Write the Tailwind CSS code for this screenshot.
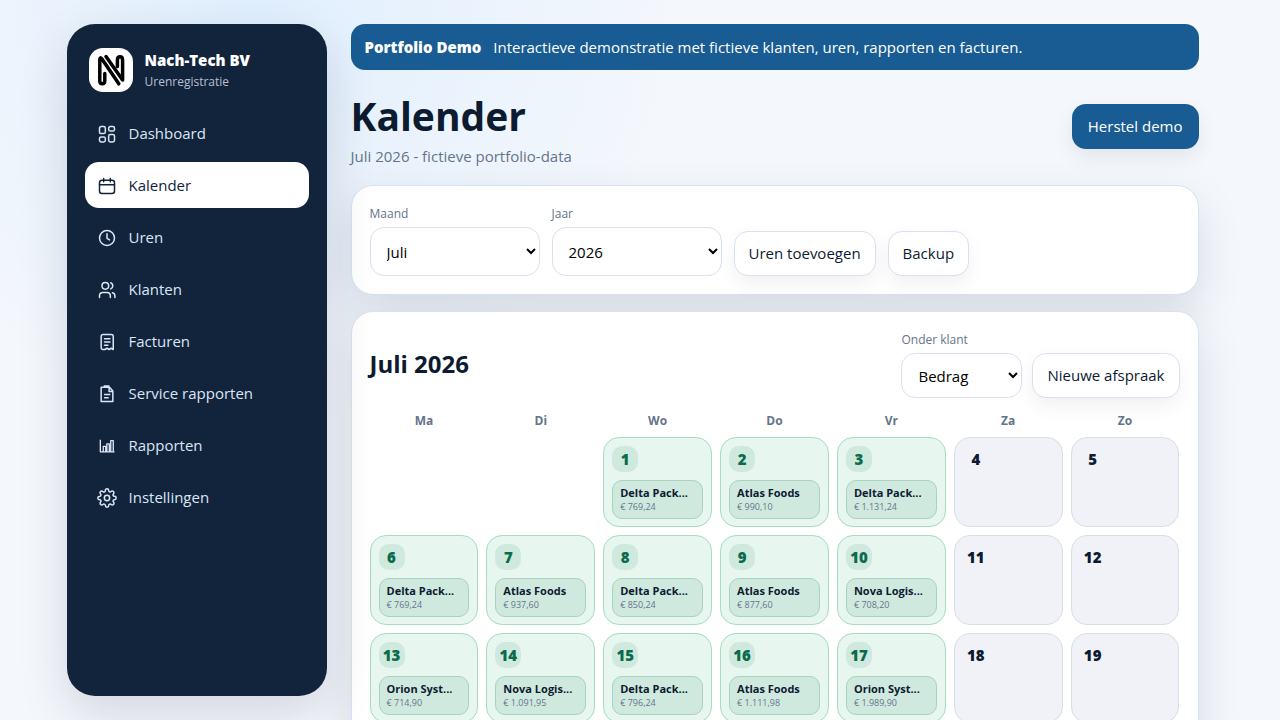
<!DOCTYPE html>
<html lang="nl">
<head>
<meta charset="utf-8">
<meta name="viewport" content="width=device-width, initial-scale=1">
<title>Kalender - Nach-Tech BV</title>
<script src="https://cdn.jsdelivr.net/npm/@tailwindcss/browser@4"></script>
</head>
<body class="min-h-screen bg-[#f4f7fc] bg-[radial-gradient(circle_at_20%_0%,#e0effe_0px,#f4f7fc_420px)] bg-no-repeat pr-[15px] font-['Segoe_UI','Open_Sans',sans-serif] text-[15px] text-[#0d1b30]">
<div class="mx-auto flex max-w-[1180px] items-start gap-6 p-6">

  <aside class="sticky top-6 h-[calc(100vh-48px)] w-[260px] shrink-0 rounded-[28px] bg-[#12243c] p-[18px] shadow-[0_18px_50px_rgba(15,23,42,0.14)]">
    <div class="flex items-center gap-3 px-1 pt-[6px] pb-[18px]">
      <svg class="size-11 shrink-0 rounded-[14px] bg-white" viewBox="0 0 44 44" fill="none" stroke="#000" stroke-width="3.500" stroke-linecap="round" stroke-linejoin="round" role="img" aria-label="Nach-Tech logo">
        <path d="M29.800 35.800 12.800 10.800Q10.800 8.500 10.800 12V33Q10.800 35.800 13.300 35.800 15.800 35.800 15.800 32.500V25.500"/>
        <path d="M17 8.600 33.600 32V12Q33.600 8.700 31 8.700 28.400 8.700 28.400 12V18.500"/>
      </svg>
      <div>
        <div class="text-[15px] leading-6 font-extrabold text-white">Nach-Tech BV</div>
        <div class="text-xs leading-5 text-[#b3c0d3]">Urenregistratie</div>
      </div>
    </div>
    <nav aria-label="Hoofdmenu" class="flex flex-col gap-[6px] text-[#dbe6f5]">
      <a href="#dashboard" class="flex h-[46px] items-center gap-3 rounded-[14px] px-3 pt-px">
        <svg class="size-5" viewBox="0 0 24 24" fill="none" stroke="currentColor" stroke-width="1.8" aria-hidden="true"><rect x="3" y="3" width="7" height="8.500" rx="2"/><rect x="14" y="3" width="7" height="5.500" rx="2"/><rect x="14" y="12.500" width="7" height="9" rx="2"/><rect x="3" y="15.500" width="7" height="6" rx="2"/></svg>
        Dashboard</a>
      <a href="#kalender" aria-current="page" class="flex h-[46px] items-center gap-3 rounded-[14px] bg-white px-3 pt-px text-[#12243c]">
        <svg class="size-5" viewBox="0 0 24 24" fill="none" stroke="currentColor" stroke-width="1.8" stroke-linecap="round" aria-hidden="true"><rect x="3" y="5" width="18" height="16" rx="3"/><path d="M3 10.500h18M8 3v4M16 3v4"/></svg>
        Kalender</a>
      <a href="#uren" class="flex h-[46px] items-center gap-3 rounded-[14px] px-3 pt-px">
        <svg class="size-5" viewBox="0 0 24 24" fill="none" stroke="currentColor" stroke-width="1.8" stroke-linecap="round" stroke-linejoin="round" aria-hidden="true"><circle cx="12" cy="12" r="9"/><path d="M12 7v5.500l3 1.800"/></svg>
        Uren</a>
      <a href="#klanten" class="flex h-[46px] items-center gap-3 rounded-[14px] px-3 pt-px">
        <svg class="size-5" viewBox="0 0 24 24" fill="none" stroke="currentColor" stroke-width="1.8" stroke-linecap="round" stroke-linejoin="round" aria-hidden="true"><circle cx="10" cy="7" r="4"/><path d="M3 21v-2a4 4 0 0 1 4-4h5a4 4 0 0 1 4 4v2M16.500 3.300a4 4 0 0 1 0 7.400M21.500 21v-2a4 4 0 0 0-3-3.800"/></svg>
        Klanten</a>
      <a href="#facturen" class="flex h-[46px] items-center gap-3 rounded-[14px] px-3 pt-px">
        <svg class="size-5" viewBox="0 0 24 24" fill="none" stroke="currentColor" stroke-width="1.8" stroke-linecap="round" stroke-linejoin="round" aria-hidden="true"><path d="M7 3h10a2.500 2.500 0 0 1 2.500 2.500V21l-2.500-1.500-2.500 1.500-2.500-1.500L9.500 21 7 21a2 2 0 0 1-2-2V5a2 2 0 0 1 2-2ZM9 8h6.500M9 12h6.500M9 16h4"/></svg>
        Facturen</a>
      <a href="#service" class="flex h-[46px] items-center gap-3 rounded-[14px] px-3 pt-px">
        <svg class="size-5" viewBox="0 0 24 24" fill="none" stroke="currentColor" stroke-width="1.8" stroke-linejoin="round" aria-hidden="true"><path d="M5 4h10l4 4.500V21H5ZM8 2.500h7M14.500 4v5H19M8.500 12.500h7.500M8.500 16.500h5.500"/></svg>
        Service rapporten</a>
      <a href="#rapporten" class="flex h-[46px] items-center gap-3 rounded-[14px] px-3 pt-px">
        <svg class="size-5" viewBox="0 0 24 24" fill="none" stroke="currentColor" stroke-width="1.600" stroke-linejoin="round" aria-hidden="true"><path d="M4 4.500V19h17M7.500 19v-6.500h3V19M11.800 19V9.500h3V19M16.500 19V5.500h3V19"/></svg>
        Rapporten</a>
      <a href="#instellingen" class="flex h-[46px] items-center gap-3 rounded-[14px] px-3 pt-px">
        <svg class="size-5" viewBox="0 0 24 24" fill="none" stroke="currentColor" stroke-width="1.8" stroke-linecap="round" stroke-linejoin="round" aria-hidden="true"><circle cx="12" cy="12" r="3.200"/><path d="M19.400 15a1.650 1.650 0 0 0 .33 1.820l.06.06a2 2 0 1 1-2.830 2.830l-.06-.06a1.650 1.650 0 0 0-1.820-.33 1.650 1.650 0 0 0-1 1.510V21a2 2 0 0 1-4 0v-.09A1.650 1.650 0 0 0 9 19.400a1.650 1.650 0 0 0-1.820.33l-.06.06a2 2 0 1 1-2.830-2.830l.06-.06a1.650 1.650 0 0 0 .33-1.820 1.650 1.650 0 0 0-1.510-1H3a2 2 0 0 1 0-4h.09A1.650 1.650 0 0 0 4.600 9a1.650 1.650 0 0 0-.33-1.820l-.06-.06a2 2 0 1 1 2.830-2.830l.06.06a1.650 1.650 0 0 0 1.820.33H9a1.650 1.650 0 0 0 1-1.510V3a2 2 0 0 1 4 0v.09a1.650 1.650 0 0 0 1 1.510 1.650 1.650 0 0 0 1.820-.33l.06-.06a2 2 0 1 1 2.830 2.830l-.06.06a1.650 1.650 0 0 0-.33 1.820V9a1.650 1.650 0 0 0 1.510 1H21a2 2 0 0 1 0 4h-.09a1.650 1.650 0 0 0-1.510 1z"/></svg>
        Instellingen</a>
    </nav>
  </aside>

  <main class="min-w-0 flex-1">
    <div class="flex h-[46px] items-center gap-3 rounded-[14px] bg-[#195c93] px-[14px] text-white">
      <strong class="font-extrabold">Portfolio Demo</strong><span>Interactieve demonstratie met fictieve klanten, uren, rapporten en facturen.</span>
    </div>

    <header class="mt-[18px] flex items-center justify-between">
      <div>
        <h1 class="text-[39px] leading-[56px] font-bold">Kalender</h1>
        <p class="pb-[2px] leading-6 text-[#64748b]">Juli 2026 - fictieve portfolio-data</p>
      </div>
      <button type="button" class="mb-[5px] h-[45px] rounded-[14px] bg-[#195c93] px-4 text-white shadow-[0_8px_20px_rgba(15,23,42,0.08)]">Herstel demo</button>
    </header>

    <section class="mt-[15px] flex items-end gap-3 rounded-[22px] border border-[#d7e1f0] bg-white p-[18px] shadow-[0_18px_46px_rgba(15,23,42,0.12)]">
      <label class="flex w-[170px] flex-col gap-[3px] text-xs leading-5 text-[#64748b]">Maand
        <select class="h-[49px] rounded-[14px] border border-[#d7e1f0] bg-white px-3 text-[15px] text-black"><option>Juli</option></select>
      </label>
      <label class="flex w-[170px] flex-col gap-[3px] text-xs leading-5 text-[#64748b]">Jaar
        <select class="h-[49px] rounded-[14px] border border-[#d7e1f0] bg-white px-3 text-[15px] text-black"><option>2026</option></select>
      </label>
      <button type="button" class="h-[45px] rounded-[14px] border border-[#d7e1f0] bg-white px-[14px] shadow-[0_8px_20px_rgba(15,23,42,0.06)]">Uren toevoegen</button>
      <button type="button" class="h-[45px] rounded-[14px] border border-[#d7e1f0] bg-white px-[14px] shadow-[0_8px_20px_rgba(15,23,42,0.06)]">Backup</button>
    </section>

    <section class="mt-4 rounded-[22px] border border-[#d7e1f0] bg-white p-[18px] shadow-[0_18px_46px_rgba(15,23,42,0.12)]">
      <div class="flex items-center justify-between">
        <h2 class="text-2xl leading-8 font-bold">Juli 2026</h2>
        <div class="flex items-end gap-[10px]">
          <label class="flex w-[121px] flex-col gap-[3px] text-xs leading-5 text-[#64748b]">Onder klant
            <select class="h-[45px] rounded-[14px] border border-[#d7e1f0] bg-white px-3 text-[15px] text-black"><option>Bedrag</option></select>
          </label>
          <button type="button" class="h-[45px] rounded-[14px] border border-[#d7e1f0] bg-white px-[14px] shadow-[0_8px_20px_rgba(15,23,42,0.06)]">Nieuwe afspraak</button>
        </div>
      </div>
      <div class="mt-[14px] grid grid-cols-7 gap-x-2 text-center text-xs leading-[18px] font-bold text-[#64748b]">
        <span>Ma</span><span>Di</span><span>Wo</span><span>Do</span><span>Vr</span><span>Za</span><span>Zo</span>
      </div>
      <div id="days" class="mt-[7px] grid grid-cols-7 gap-2"></div>
    </section>
  </main>
</div>

<script>
const days = [
  null, null,
  [1, 'Delta Pack...', '769,24'], [2, 'Atlas Foods', '990,10'], [3, 'Delta Pack...', '1.131,24'], [4], [5],
  [6, 'Delta Pack...', '769,24'], [7, 'Atlas Foods', '937,60'], [8, 'Delta Pack...', '850,24'], [9, 'Atlas Foods', '877,60'], [10, 'Nova Logis...', '708,20'], [11], [12],
  [13, 'Orion Syst...', '714,90'], [14, 'Nova Logis...', '1.091,95'], [15, 'Delta Pack...', '796,24'], [16, 'Atlas Foods', '1.111,98'], [17, 'Orion Syst...', '1.989,90'], [18], [19]
];
document.getElementById('days').innerHTML = days.map(d => {
  if (!d) return '<div></div>';
  const [n, client, amount] = d;
  if (!client) return `<div class="h-[90px] rounded-2xl border border-[#d8dee9] bg-[#f1f2f7] p-2"><span class="flex size-[26px] items-center justify-center text-[15px] font-extrabold">${n}</span></div>`;
  return `<div class="h-[90px] min-w-0 rounded-2xl border border-[#a5dcc3] bg-[#e7f6ef] p-2">
    <span class="flex size-[26px] items-center justify-center rounded-[10px] bg-[#d0e9df] text-[15px] font-extrabold text-[#0b6b4b]">${n}</span>
    <div class="mt-2 h-[39px] rounded-[10px] border border-[#a6d3c2] bg-[#d0e9df] px-[7px] pt-[4px]">
      <div class="text-[11px] leading-4 font-bold whitespace-nowrap">${client}</div>
      <div class="text-[9px] leading-3 text-[#64748b]">€ ${amount}</div>
    </div>
  </div>`;
}).join('');
</script>
</body>
</html>
